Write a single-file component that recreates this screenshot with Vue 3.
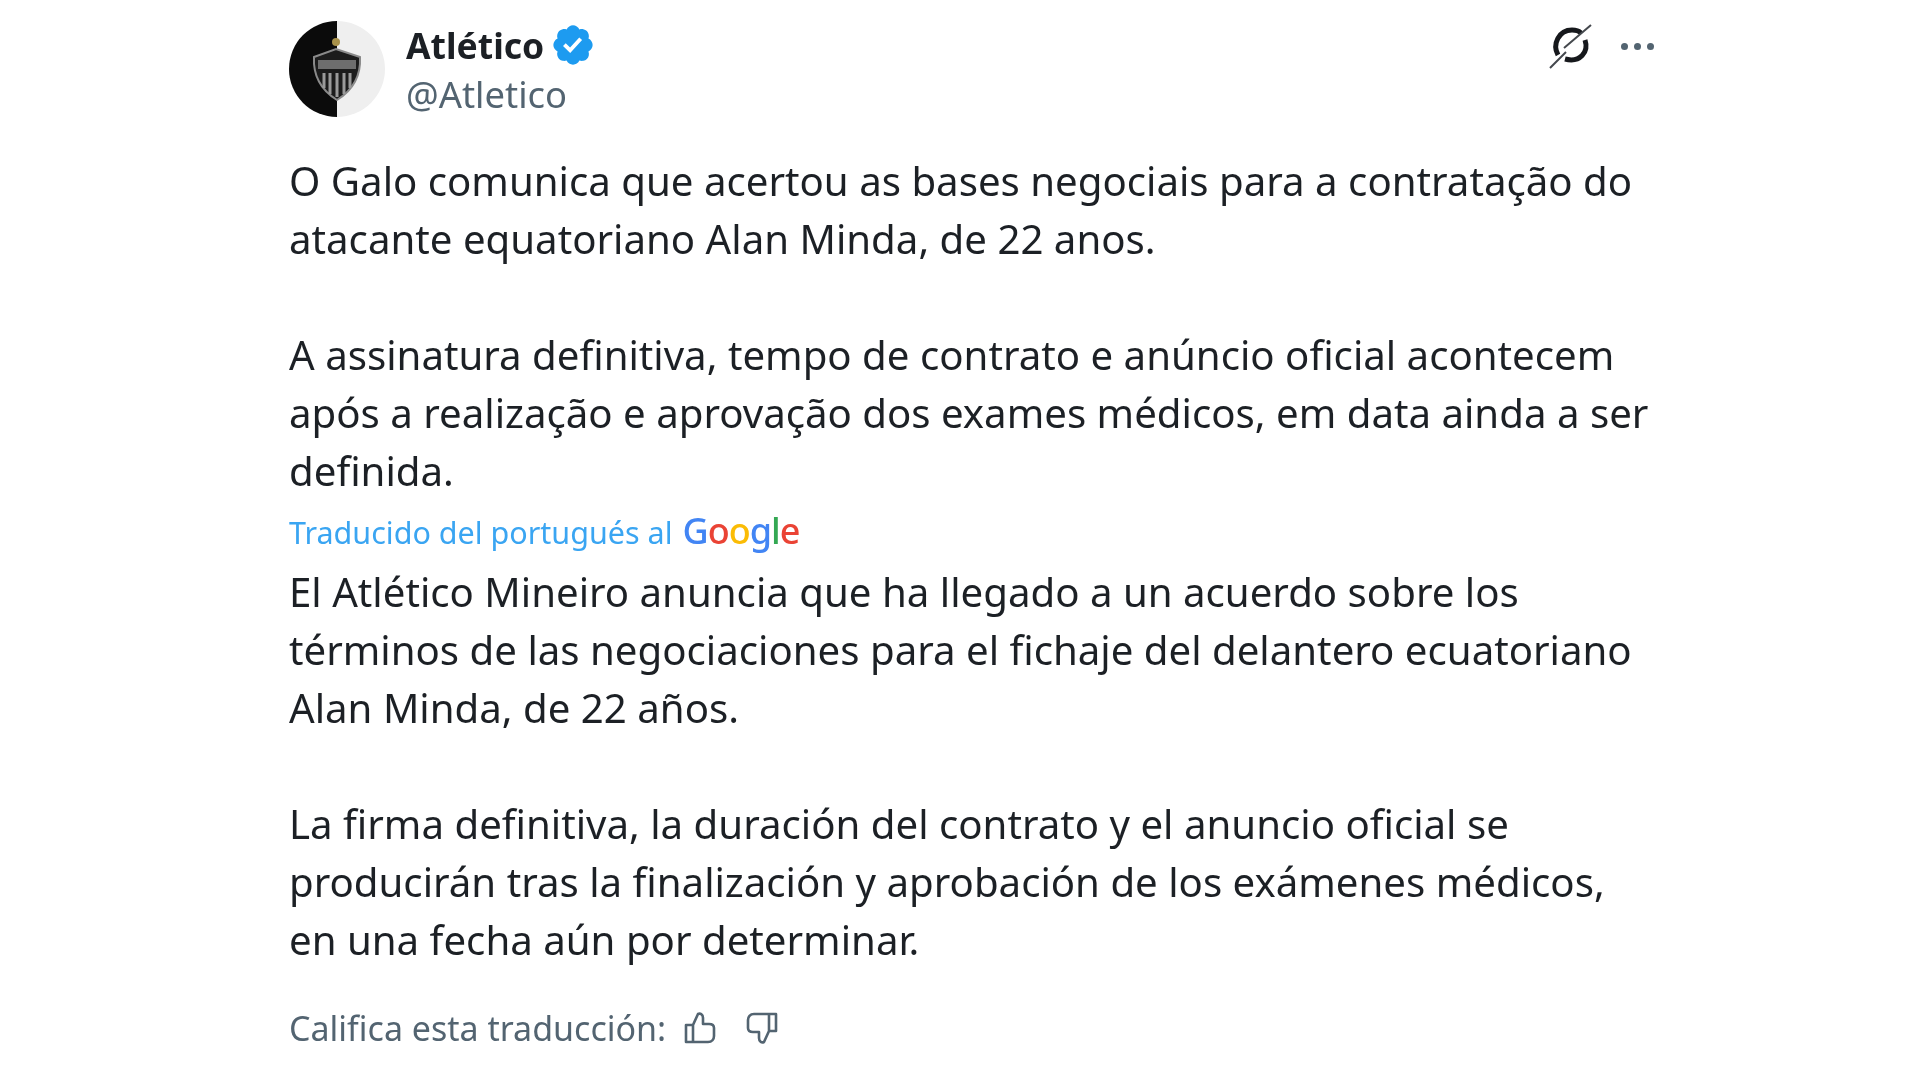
<script setup>
const original = [
  'O Galo comunica que acertou as bases negociais para a contratação do',
  'atacante equatoriano Alan Minda, de 22 anos.',
  '',
  'A assinatura definitiva, tempo de contrato e anúncio oficial acontecem',
  'após a realização e aprovação dos exames médicos, em data ainda a ser',
  'definida.',
]

const translated = [
  'El Atlético Mineiro anuncia que ha llegado a un acuerdo sobre los',
  'términos de las negociaciones para el fichaje del delantero ecuatoriano',
  'Alan Minda, de 22 años.',
  '',
  'La firma definitiva, la duración del contrato y el anuncio oficial se',
  'producirán tras la finalización y aprobación de los exámenes médicos,',
  'en una fecha aún por determinar.',
]
</script>

<template>
  <div class="tweet">
    <header class="tweet-head">
      <svg class="avatar" viewBox="0 0 96 96" width="96" height="96">
        <defs>
          <clipPath id="round"><circle cx="48" cy="48" r="48" /></clipPath>
        </defs>
        <g clip-path="url(#round)">
          <rect width="96" height="96" fill="#efefef" />
          <rect width="48" height="96" fill="#0b0b0b" />
        </g>
        <circle cx="47" cy="21" r="4" fill="#a8914a" />
        <path d="M25 36 L47 28 L71 36 C72 54 64 69 48 79 C32 69 24 54 25 36 Z" fill="#1c1c1c" stroke="#8a8a8a" stroke-width="2" />
        <path d="M29 39 H67 V48 H29 Z" fill="#6e6e6e" />
        <path d="M35 52 V67 M41 52 V73 M48 52 V76 M55 52 V73 M61 52 V67" stroke="#9a9a9a" stroke-width="3" fill="none" />
      </svg>
      <div class="names">
        <div class="name-row">
          <span class="name">Atlético</span>
          <svg class="badge" viewBox="0 0 22 22" width="46" height="46">
            <path fill="#1d9bf0" d="M20.396 11c-.018-.646-.215-1.275-.57-1.816-.354-.54-.852-.972-1.438-1.246.223-.607.27-1.264.14-1.897-.131-.634-.437-1.218-.882-1.687-.47-.445-1.053-.75-1.687-.882-.633-.13-1.29-.083-1.897.14-.273-.587-.704-1.086-1.245-1.44S11.647 1.62 11 1.604c-.646.017-1.273.213-1.813.568s-.969.854-1.24 1.44c-.608-.223-1.267-.272-1.902-.14-.635.13-1.22.436-1.69.882-.445.47-.749 1.055-.878 1.688-.13.633-.08 1.29.144 1.896-.587.274-1.087.705-1.443 1.245-.356.54-.555 1.17-.574 1.817.02.647.218 1.276.574 1.817.356.54.856.972 1.443 1.245-.224.606-.274 1.263-.144 1.896.13.634.433 1.218.877 1.688.47.443 1.054.747 1.687.878.633.132 1.29.084 1.897-.136.274.586.705 1.084 1.246 1.439.54.354 1.17.551 1.816.569.647-.016 1.276-.213 1.817-.567s.972-.854 1.245-1.44c.604.239 1.266.296 1.903.164.636-.132 1.22-.447 1.68-.907.46-.46.776-1.044.908-1.681s.075-1.299-.165-1.903c.586-.274 1.084-.705 1.439-1.246.354-.54.551-1.17.569-1.816z" />
            <path fill="#fff" d="M9.662 14.85l-3.429-3.428 1.293-1.302 2.072 2.072 4.4-4.794 1.347 1.246z" />
          </svg>
        </div>
        <div class="handle">@Atletico</div>
      </div>
      <div class="head-actions">
        <svg class="grok" viewBox="0 0 48 48" width="48" height="48">
          <path d="M11 33 C5 22 12 8 25 8 C29 8 32 9 34 11" fill="none" stroke="#16181c" stroke-width="5" />
          <path d="M38 18 C42 30 33 41 18 37" fill="none" stroke="#16181c" stroke-width="5" />
          <path d="M3 46 L19 30 M17 26 L44 3" fill="none" stroke="#44484d" stroke-width="2" />
        </svg>
        <div class="more"><i></i><i></i><i></i></div>
      </div>
    </header>

    <div class="body">
      <div class="text">
        <div v-for="(line, i) in original" :key="i" class="line">{{ line }}</div>
      </div>
      <div class="attribution">
        <span>Traducido del portugués al</span>
        <span class="google"><b>G</b><b>o</b><b>o</b><b>g</b><b>l</b><b>e</b></span>
      </div>
      <div class="text">
        <div v-for="(line, i) in translated" :key="i" class="line">{{ line }}</div>
      </div>
    </div>

    <footer class="rate">
      <span>Califica esta traducción:</span>
      <svg viewBox="0 0 34 34" width="34" height="34" class="thumb">
        <path d="M10 14 H3 V31 H10 M10 14 V31 H25 C29 31 31 28 31 25 V17 C31 14 29 13 26 13 H20 L20 7 C20 3 17 2 15 3 L10 14 Z" fill="none" stroke="#536471" stroke-width="2.6" stroke-linejoin="round" />
      </svg>
      <svg viewBox="0 0 34 34" width="34" height="34" class="thumb down">
        <path d="M24 20 H31 V3 H24 M24 20 V3 H9 C5 3 3 6 3 9 V17 C3 20 5 21 8 21 H14 L14 27 C14 31 17 32 19 31 L24 20 Z" fill="none" stroke="#536471" stroke-width="2.6" stroke-linejoin="round" />
      </svg>
    </footer>
  </div>
</template>

<style scoped>
.tweet {
  box-sizing: border-box;
  width: 1920px;
  height: 1080px;
  padding: 21px 266px 0 289px;
  font-family: "Noto Sans", "Open Sans", sans-serif;
  color: #1c2025;
  background: #fff;
  overflow: hidden;
  filter: blur(0.6px);
}

.tweet-head {
  display: flex;
  align-items: flex-start;
  height: 96px;
}

.avatar {
  flex-shrink: 0;
}

.names {
  margin-left: 21px;
  flex: 1;
}

.name-row {
  display: flex;
  align-items: center;
  gap: 6px;
  height: 48px;
}

.name {
  font-size: 35.5px;
  font-weight: 700;
}

.handle {
  font-size: 36.4px;
  line-height: 50px;
  color: #536471;
}

.head-actions {
  display: flex;
  align-items: center;
  gap: 24px;
  margin-top: 1px;
  transform: none;
}

.grok {
  margin-right: 2px;
}

.more {
  display: flex;
  gap: 6px;
}

.more i {
  width: 7px;
  height: 7px;
  border-radius: 50%;
  background: #536471;
}

.body {
  margin-top: 35px;
}

.line {
  height: 58px;
  line-height: 58px;
  font-size: 40.2px;
  white-space: nowrap;
}

.attribution {
  display: flex;
  align-items: center;
  gap: 10px;
  height: 63px;
  font-size: 30.5px;
  color: #3aa5f2;
}

.google {
  font-size: 36px;
  letter-spacing: -1px;
  margin-top: -3px;
}

.google b {
  font-weight: 500;
}

.google b:nth-child(1),
.google b:nth-child(4) {
  color: #4285f4;
}

.google b:nth-child(2),
.google b:nth-child(6) {
  color: #ea4335;
}

.google b:nth-child(3) {
  color: #fbbc05;
}

.google b:nth-child(5) {
  color: #34a853;
}

.rate {
  display: flex;
  align-items: center;
  margin-top: 36px;
  font-size: 34px;
  color: #536471;
}

.thumb {
  margin-left: 17px;
}

.thumb.down {
  margin-left: 28px;
}
</style>

<style>
html, body {
  margin: 0;
  background: #fff;
}
</style>
